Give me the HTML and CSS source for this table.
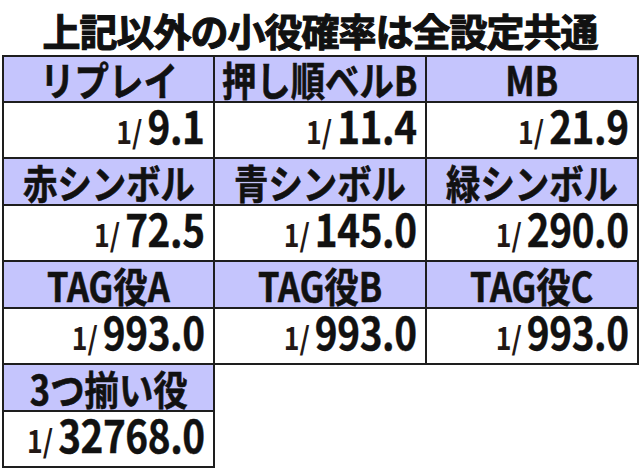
FILE: index.html
```html
<!DOCTYPE html>
<html lang="ja">
<head>
<meta charset="utf-8">
<title>小役確率</title>
<link rel="stylesheet" href="styles.css">
</head>
<body>
<h1 class="title">上記以外の小役確率は全設定共通</h1>
<div class="odds">
  <div class="cell head"><span class="lbl">リプレイ</span></div>
  <div class="cell head"><span class="lbl">押し順ベルB</span></div>
  <div class="cell head"><span class="lbl">MB</span></div>

  <div class="cell val"><span class="v"><span class="one">1/</span><span class="num">9.1</span></span></div>
  <div class="cell val"><span class="v"><span class="one">1/</span><span class="num">11.4</span></span></div>
  <div class="cell val"><span class="v"><span class="one">1/</span><span class="num">21.9</span></span></div>

  <div class="cell head"><span class="lbl">赤シンボル</span></div>
  <div class="cell head"><span class="lbl">青シンボル</span></div>
  <div class="cell head"><span class="lbl">緑シンボル</span></div>

  <div class="cell val"><span class="v"><span class="one">1/</span><span class="num">72.5</span></span></div>
  <div class="cell val"><span class="v"><span class="one">1/</span><span class="num">145.0</span></span></div>
  <div class="cell val"><span class="v"><span class="one">1/</span><span class="num">290.0</span></span></div>

  <div class="cell head"><span class="lbl">TAG役A</span></div>
  <div class="cell head"><span class="lbl">TAG役B</span></div>
  <div class="cell head"><span class="lbl">TAG役C</span></div>

  <div class="cell val"><span class="v"><span class="one">1/</span><span class="num">993.0</span></span></div>
  <div class="cell val"><span class="v"><span class="one">1/</span><span class="num">993.0</span></span></div>
  <div class="cell val"><span class="v"><span class="one">1/</span><span class="num">993.0</span></span></div>

  <div class="cell head first"><span class="lbl">3つ揃い役</span></div>
  <div class="cell val first"><span class="v"><span class="one">1/</span><span class="num">32768.0</span></span></div>
</div>
</body>
</html>
```

FILE: styles.css
```css
html, body {
  margin: 0;
  padding: 0;
  background: #ffffff;
}
body {
  width: 640px;
  height: 470px;
  overflow: hidden;
  font-family: "Noto Sans CJK JP", "Noto Sans", sans-serif;
  color: #1a1a1a;
}
.title {
  margin: 0;
  height: 55px;
  line-height: 60px;
  font-size: 38px;
  font-weight: 700;
  text-align: center;
  color: #111;
  -webkit-text-stroke: 1.1px #111;
  letter-spacing: -1px;
}
.odds {
  margin-left: 2px;
  width: 635px;
  display: grid;
  grid-template-columns: 211px 212px 212px;
  grid-template-rows: 46px 56px 47px 56px 47px 56px 47px 56px;
  border-top: 2px solid #1e1e1e;
  border-left: 2px solid #1e1e1e;
}
.cell {
  box-sizing: border-box;
  border-right: 2px solid #1e1e1e;
  border-bottom: 2px solid #1e1e1e;
  display: flex;
  align-items: center;
  white-space: nowrap;
}
.first {
  grid-column: 1;
}
.head {
  background: #c5c5fd;
  justify-content: center;
}
.lbl {
  display: inline-block;
  font-size: 40px;
  font-weight: 700;
  line-height: 44px;
  margin: 0 -20px;
  transform: scaleX(0.86);
  color: #111;
  -webkit-text-stroke: 0.6px #111;
}
.val {
  justify-content: flex-end;
  padding-right: 8px;
  color: #231815;
}
.v {
  display: inline-block;
  line-height: 50px;
  transform: scaleX(0.86);
  transform-origin: right center;
  padding-top: 2px;
}
.one {
  font-size: 31px;
  font-weight: 700;
  margin-right: 6px;
}
.num {
  font-size: 45px;
  font-weight: 700;
  letter-spacing: -0.5px;
  color: #111;
  -webkit-text-stroke: 0.4px #111;
}
```
